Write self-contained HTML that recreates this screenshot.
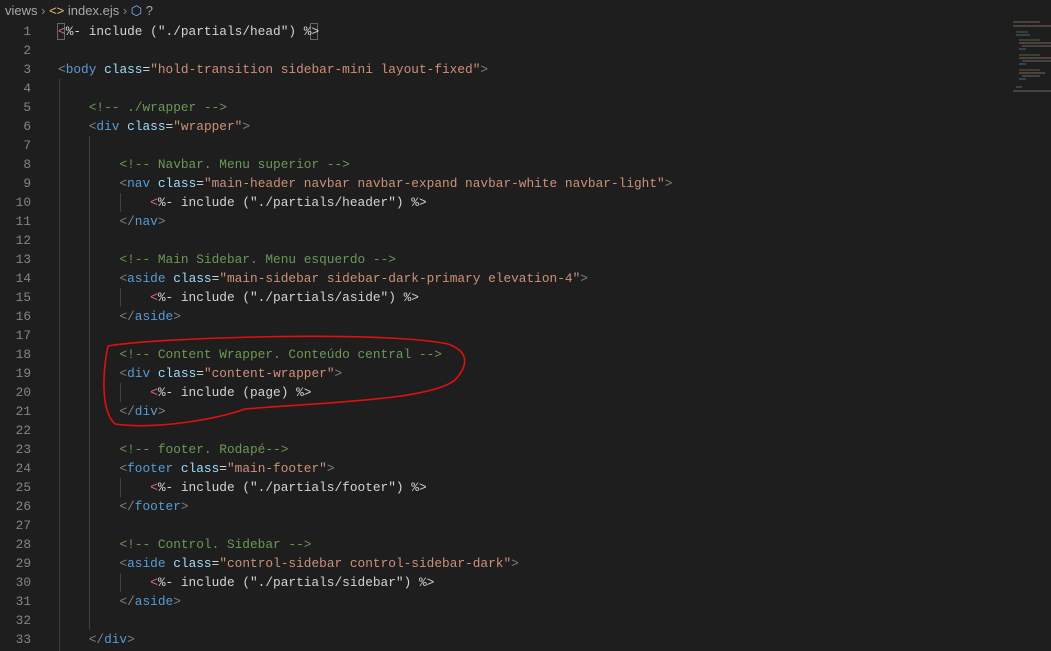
<!DOCTYPE html>
<html><head><meta charset="utf-8"><style>
html,body{margin:0;padding:0;background:#1e1e1e;width:1051px;height:651px;overflow:hidden}
body{position:relative;font-family:"Liberation Mono",monospace;font-size:12.8px}
#bc{position:absolute;left:5px;top:2px;height:18px;line-height:18px;font-family:"Liberation Sans",sans-serif;font-size:13px;color:#a9a9a9;white-space:pre}
#nums{position:absolute;left:0;top:22px;width:31px;text-align:right;color:#858585;line-height:19px}
#code{position:absolute;left:58px;top:22px;color:#d4d4d4;white-space:pre;margin:0;font-family:"Liberation Mono",monospace;font-size:12.8px;line-height:19px}
.g{color:#808080}.t{color:#569cd6}.a{color:#9cdcfe}.s{color:#ce9178}.c{color:#6a9955}.r{color:#e06c75}
.guide{position:absolute;width:1px;background:#404040}
</style></head><body>
<div id="bc">views <span style="color:#888">›</span> <span style="color:#e5c07b">&lt;&gt;</span> index.ejs <span style="color:#888">›</span> <span style="color:#75beff">⬡</span> ?</div>
<div id="nums">1<br>2<br>3<br>4<br>5<br>6<br>7<br>8<br>9<br>10<br>11<br>12<br>13<br>14<br>15<br>16<br>17<br>18<br>19<br>20<br>21<br>22<br>23<br>24<br>25<br>26<br>27<br>28<br>29<br>30<br>31<br>32<br>33</div>
<div class="guide" style="left:59px;top:79px;height:580px"></div>
<div class="guide" style="left:89px;top:136px;height:494px"></div>
<div class="guide" style="left:120px;top:193px;height:19px"></div>
<div class="guide" style="left:120px;top:288px;height:19px"></div>
<div class="guide" style="left:120px;top:383px;height:19px"></div>
<div class="guide" style="left:120px;top:478px;height:19px"></div>
<div class="guide" style="left:120px;top:573px;height:19px"></div>
<div style="position:absolute;left:57px;top:23px;width:8px;height:17px;border:1px solid #666;box-sizing:border-box"></div>
<div style="position:absolute;left:310px;top:23px;width:8px;height:17px;border:1px solid #666;box-sizing:border-box"></div>
<pre id="code"><span class="r">&lt;</span>%- include (<span>"./partials/head"</span>) %&gt;

<span class="g">&lt;</span><span class="t">body</span> <span class="a">class</span>=<span class="s">"hold-transition sidebar-mini layout-fixed"</span><span class="g">&gt;</span>

    <span class="c">&lt;!-- ./wrapper --&gt;</span>
    <span class="g">&lt;</span><span class="t">div</span> <span class="a">class</span>=<span class="s">"wrapper"</span><span class="g">&gt;</span>

        <span class="c">&lt;!-- Navbar. Menu superior --&gt;</span>
        <span class="g">&lt;</span><span class="t">nav</span> <span class="a">class</span>=<span class="s">"main-header navbar navbar-expand navbar-white navbar-light"</span><span class="g">&gt;</span>
            <span class="r">&lt;</span>%- include (<span>"./partials/header"</span>) %&gt;
        <span class="g">&lt;/</span><span class="t">nav</span><span class="g">&gt;</span>

        <span class="c">&lt;!-- Main Sidebar. Menu esquerdo --&gt;</span>
        <span class="g">&lt;</span><span class="t">aside</span> <span class="a">class</span>=<span class="s">"main-sidebar sidebar-dark-primary elevation-4"</span><span class="g">&gt;</span>
            <span class="r">&lt;</span>%- include (<span>"./partials/aside"</span>) %&gt;
        <span class="g">&lt;/</span><span class="t">aside</span><span class="g">&gt;</span>

        <span class="c">&lt;!-- Content Wrapper. Conteúdo central --&gt;</span>
        <span class="g">&lt;</span><span class="t">div</span> <span class="a">class</span>=<span class="s">"content-wrapper"</span><span class="g">&gt;</span>
            <span class="r">&lt;</span>%- include (page) %&gt;
        <span class="g">&lt;/</span><span class="t">div</span><span class="g">&gt;</span>

        <span class="c">&lt;!-- footer. Rodapé--&gt;</span>
        <span class="g">&lt;</span><span class="t">footer</span> <span class="a">class</span>=<span class="s">"main-footer"</span><span class="g">&gt;</span>
            <span class="r">&lt;</span>%- include (<span>"./partials/footer"</span>) %&gt;
        <span class="g">&lt;/</span><span class="t">footer</span><span class="g">&gt;</span>

        <span class="c">&lt;!-- Control. Sidebar --&gt;</span>
        <span class="g">&lt;</span><span class="t">aside</span> <span class="a">class</span>=<span class="s">"control-sidebar control-sidebar-dark"</span><span class="g">&gt;</span>
            <span class="r">&lt;</span>%- include (<span>"./partials/sidebar"</span>) %&gt;
        <span class="g">&lt;/</span><span class="t">aside</span><span class="g">&gt;</span>

    <span class="g">&lt;/</span><span class="t">div</span><span class="g">&gt;</span></pre>
<svg style="position:absolute;left:0;top:0" width="1051" height="651">
<path d="M108 346 C150 338 380 330 448 344 C470 352 468 366 455 380 C430 400 330 402 245 409 C220 418 160 430 115 424 C100 410 103 370 108 346 Z" fill="none" stroke="#e01010" stroke-width="1.6"/>
<g stroke-width="1" opacity="0.6">
<line x1="1013" y1="22" x2="1040" y2="22" stroke="#999"/>
<line x1="1013" y1="26" x2="1051" y2="26" stroke="#ce9178"/>
<line x1="1016" y1="32" x2="1028" y2="32" stroke="#6a9955"/>
<line x1="1016" y1="35" x2="1030" y2="35" stroke="#569cd6"/>
<line x1="1019" y1="40" x2="1040" y2="40" stroke="#6a9955"/>
<line x1="1019" y1="43" x2="1051" y2="43" stroke="#ce9178"/>
<line x1="1022" y1="46" x2="1051" y2="46" stroke="#999"/>
<line x1="1019" y1="49" x2="1026" y2="49" stroke="#569cd6"/>
<line x1="1019" y1="55" x2="1040" y2="55" stroke="#6a9955"/>
<line x1="1019" y1="58" x2="1051" y2="58" stroke="#ce9178"/>
<line x1="1022" y1="61" x2="1051" y2="61" stroke="#999"/>
<line x1="1019" y1="64" x2="1026" y2="64" stroke="#569cd6"/>
<line x1="1019" y1="70" x2="1040" y2="70" stroke="#6a9955"/>
<line x1="1019" y1="73" x2="1045" y2="73" stroke="#ce9178"/>
<line x1="1022" y1="76" x2="1040" y2="76" stroke="#999"/>
<line x1="1019" y1="79" x2="1026" y2="79" stroke="#569cd6"/>
<line x1="1016" y1="87" x2="1022" y2="87" stroke="#569cd6"/>
<line x1="1013" y1="91" x2="1051" y2="91" stroke="#999"/>
</g>
</svg>
</body></html>
